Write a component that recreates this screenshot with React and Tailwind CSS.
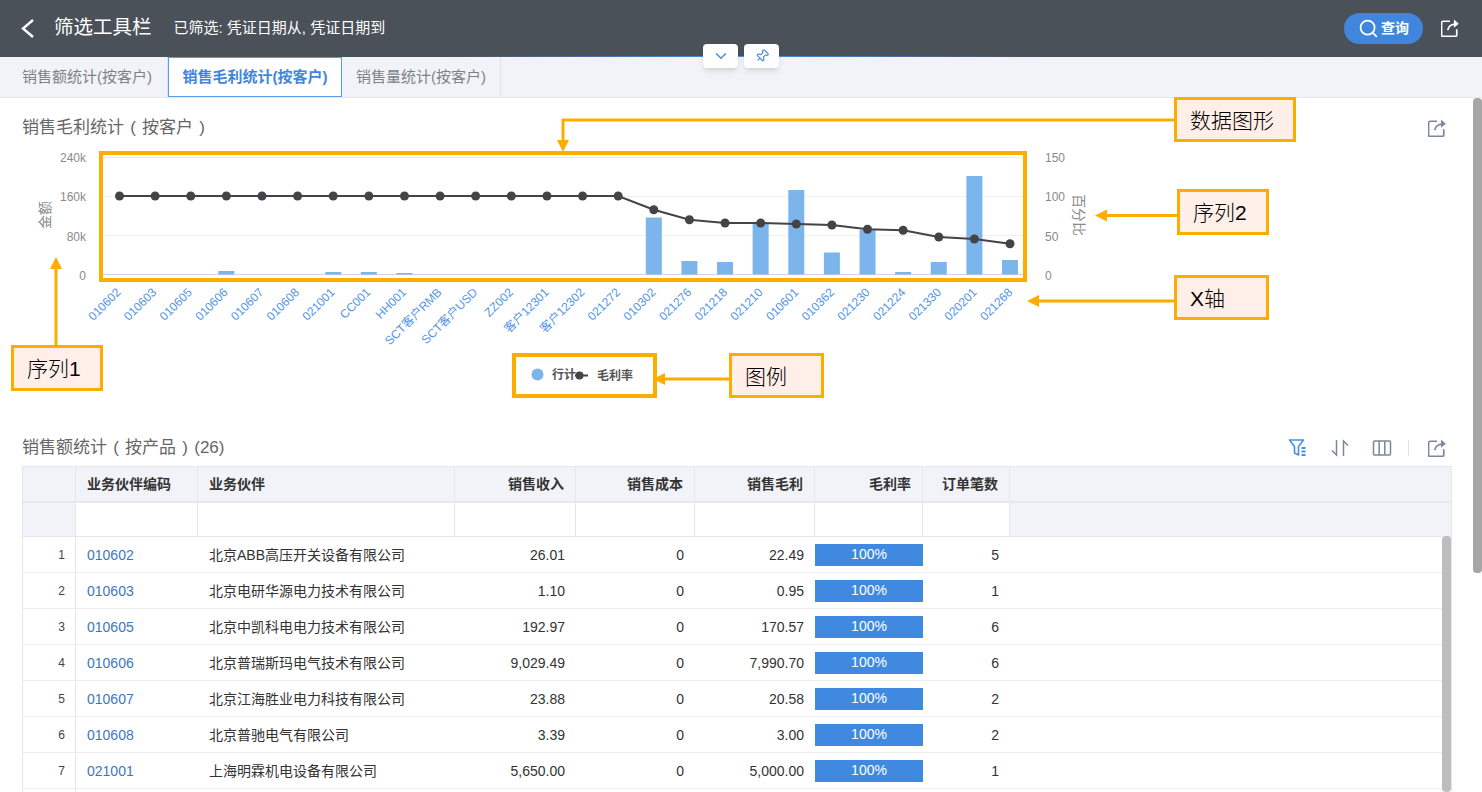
import React from "react";
import { ChevronDown, Pin, Search } from "lucide-react";

const FONT = "font-['Liberation_Sans','Noto_Sans_CJK_SC',sans-serif]";

const categories = [
  "010602", "010603", "010605", "010606", "010607", "010608", "021001", "CC001", "HH001",
  "SCT客户RMB", "SCT客户USD", "ZZ002", "客户12301", "客户12302", "021272", "010302", "021276",
  "021218", "021210", "010601", "010362", "021230", "021224", "021330", "020201", "021268",
];

// top of each bar in page px, baseline is 274.5
const barTops = {
  3: 271, 6: 272, 7: 272, 8: 273, 15: 217.5, 16: 261, 17: 262, 18: 223, 19: 190,
  20: 252.5, 21: 230, 22: 272, 23: 262, 24: 176, 25: 260,
};

const lineYs = [
  196, 196, 196, 196, 196, 196, 196, 196, 196, 196, 196, 196, 196, 196, 196,
  209.7, 219.7, 223, 223, 224, 225, 229.3, 230.3, 237, 239, 243.7,
];

const catX = (i) => 119.5 + i * 35.62;

const rows = [
  ["1", "010602", "北京ABB高压开关设备有限公司", "26.01", "0", "22.49", "5"],
  ["2", "010603", "北京电研华源电力技术有限公司", "1.10", "0", "0.95", "1"],
  ["3", "010605", "北京中凯科电电力技术有限公司", "192.97", "0", "170.57", "6"],
  ["4", "010606", "北京普瑞斯玛电气技术有限公司", "9,029.49", "0", "7,990.70", "6"],
  ["5", "010607", "北京江海胜业电力科技有限公司", "23.88", "0", "20.58", "2"],
  ["6", "010608", "北京普驰电气有限公司", "3.39", "0", "3.00", "2"],
  ["7", "021001", "上海明霖机电设备有限公司", "5,650.00", "0", "5,000.00", "1"],
];

const GRID = "grid grid-cols-[53px_122px_257px_121px_119px_120px_108px_87px_1fr]";

const ExportIcon = ({ className }) => (
  <svg viewBox="1 1 16 16" fill="none" stroke="currentColor" strokeWidth="1.5" className={className}>
    <path d="M9 3H3a1.500 1.500 0 0 0-1.500 1.500v10.500A1.500 1.500 0 0 0 3 16.500h10.500a1.500 1.500 0 0 0 1.500-1.500v-5" />
    <path d="M7 11c.5-3.500 3-5.500 7.500-5.500" />
    <path d="M12.500 1.500 16.800 5.300l-4.300 3.500" fill="currentColor" stroke="none" />
  </svg>
);

const FilterIcon = () => (
  <svg viewBox="0 0 20 20" fill="none" stroke="#4a90e2" strokeWidth="1.6" className="w-[20px] h-[20px]">
    <path d="M1.500 2h14l-5 6.500V17l-4-2V8.500z" strokeLinejoin="round" />
    <path d="M13.500 10h4M13.500 13.500h4M13.500 17h4" strokeWidth="1.800" />
  </svg>
);

const SortIcon = () => (
  <svg viewBox="0 0 20 20" fill="none" stroke="#7c8798" strokeWidth="1.500" className="w-[20px] h-[20px]">
    <path d="M6.500 2v15L2 12.500" />
    <path d="M13.500 18V3l4.500 4.500" />
  </svg>
);

const ColumnsIcon = () => (
  <svg viewBox="0 0 20 20" fill="none" stroke="#7c8798" strokeWidth="1.500" className="w-[20px] h-[20px]">
    <rect x="1.500" y="3" width="17" height="14" rx="1" />
    <path d="M7.200 3v14M12.800 3v14" />
  </svg>
);

const Chart = () => (
  <svg viewBox="22 150 1430 260" className="block w-[1430px] h-[260px] mt-[11px]">
    {[235.5, 196.5, 157.5].map((y) => (
      <line key={y} x1="101" x2="1028" y1={y} y2={y} stroke="#eef0f3" />
    ))}
    <line x1="101" x2="1028" y1="274.500" y2="274.500" stroke="#ccd6eb" />

    {[["240k", 162], ["160k", 201], ["80k", 240.5], ["0", 279.5]].map(([t, y]) => (
      <text key={t} x="86" y={y} textAnchor="end" fontSize="12" fill="#8a8a8a">{t}</text>
    ))}
    {[["150", 162], ["100", 201], ["50", 240.5], ["0", 279.5]].map(([t, y]) => (
      <text key={t} x="1045" y={y} fontSize="12" fill="#8a8a8a">{t}</text>
    ))}
    <text transform="translate(50 215) rotate(-90)" textAnchor="middle" fontSize="14" fill="#8a8a8a">金额</text>
    <text transform="translate(1074 215) rotate(90)" textAnchor="middle" fontSize="14" fill="#8a8a8a">百分比</text>

    {Object.entries(barTops).map(([i, top]) => (
      <rect key={i} x={catX(Number(i)) - 8} y={top} width="16" height={274.5 - top} fill="#7cb5ec" />
    ))}

    <polyline
      points={lineYs.map((y, i) => `${catX(i)},${y}`).join(" ")}
      fill="none"
      stroke="#434348"
      strokeWidth="2"
    />
    {lineYs.map((y, i) => (
      <circle key={i} cx={catX(i)} cy={y} r="4.500" fill="#434348" />
    ))}

    {categories.map((c, i) => (
      <text
        key={c}
        transform={`translate(${catX(i) + 2 + i * 0.05} 293) rotate(-45)`}
        textAnchor="end"
        fontSize="12"
        fill="#5596e6"
      >
        {c}
      </text>
    ))}

    <circle cx="537.500" cy="374.500" r="6" fill="#7cb5ec" />
    <text x="552" y="379" fontSize="12" fontWeight="700" fill="#555">行计</text>
    <line x1="575" x2="588" y1="375.500" y2="375.500" stroke="#434348" strokeWidth="2" />
    <circle cx="579.500" cy="375.500" r="4" fill="#434348" />
    <text x="597" y="380" fontSize="12" fontWeight="700" fill="#555">毛利率</text>
  </svg>
);

const Callout = ({ className, children }) => (
  <div
    className={`absolute flex items-center pl-[13px] pt-[2px] border-[3px] border-[#fdac00] bg-[#ffefe8] text-[21px] font-light text-black ${className}`}
  >
    {children}
  </div>
);

const Annotations = () => (
  <>
    <svg viewBox="0 0 1482 792" className="absolute inset-0 w-[1482px] h-[792px] pointer-events-none">
      <g fill="none" stroke="#fdac00">
        <rect x="101" y="153" width="924" height="127" strokeWidth="4" />
        <rect x="514" y="355" width="141" height="41" strokeWidth="4" />
        <path d="M1174 120H563v24" strokeWidth="3" />
        <path d="M1177 215.500h-72" strokeWidth="3" />
        <path d="M1174 301h-136" strokeWidth="3" />
        <path d="M56 345v-80" strokeWidth="3" />
        <path d="M729 379h-66" strokeWidth="3" />
      </g>
      <g fill="#fdac00">
        <path d="M557 140h12l-6 12z" />
        <path d="M1107 209.500v12l-12-6z" />
        <path d="M1039 295v12l-12-6z" />
        <path d="M50 269h12l-6-12z" />
        <path d="M665 373v12l-12-6z" />
      </g>
    </svg>
    <Callout className="left-[1174px] top-[97px] w-[122px] h-[45px]">数据图形</Callout>
    <Callout className="left-[1177px] top-[189px] w-[92px] h-[46px]">序列2</Callout>
    <Callout className="left-[1174px] top-[275px] w-[95px] h-[45px]">X轴</Callout>
    <Callout className="left-[11px] top-[345px] w-[92px] h-[46px]">序列1</Callout>
    <Callout className="left-[729px] top-[353px] w-[95px] h-[45px]">图例</Callout>
  </>
);

const Tab = ({ active, className = "", children }) => (
  <div
    className={
      active
        ? "flex items-center justify-center w-[174px] h-[40px] bg-white border border-[#5a9de8] text-[#3f86dc] font-bold text-[15px]"
        : `flex items-center h-[40px] border-r border-[#dfe3ea] text-[#7d828a] text-[15px] ${className}`
    }
  >
    {children}
  </div>
);

const Th = ({ right, children, className = "" }) => (
  <div
    className={`flex items-center px-[11px] border-r border-[#e4e7ed] font-bold text-[14px] text-[#333] ${
      right ? "justify-end" : ""
    } ${className}`}
  >
    {children}
  </div>
);

const Num = ({ children }) => (
  <div className="flex items-center justify-end pt-px pr-[11px] text-[14px] text-[#333]">{children}</div>
);

const TableHead = () => (
  <>
    <div className={`${GRID} h-[36px] bg-[#f1f3f8] border-b-2 border-[#e6e8ee]`}>
      <Th />
      <Th>业务伙伴编码</Th>
      <Th>业务伙伴</Th>
      <Th right>销售收入</Th>
      <Th right>销售成本</Th>
      <Th right>销售毛利</Th>
      <Th right>毛利率</Th>
      <Th right>订单笔数</Th>
      <div />
    </div>
    <div className={`${GRID} h-[34px] border-b border-[#e4e7ed]`}>
      <div className="bg-[#f1f3f8] border-r border-[#e4e7ed]" />
      {[0, 1, 2, 3, 4, 5, 6].map((i) => (
        <div key={i} className="bg-white border-r border-[#e4e7ed]" />
      ))}
      <div className="bg-[#f1f3f8]" />
    </div>
  </>
);

const TableRow = ({ row }) => (
  <div className={`${GRID} h-[36px] border-b border-[#ebedf0]`}>
    <div className="flex items-center justify-end pt-px pr-[10px] border-r border-[#e4e7ed] text-[12px] text-[#444]">
      {row[0]}
    </div>
    <div className="flex items-center pt-px pl-[11px] text-[14px] text-[#3a78c2]">{row[1]}</div>
    <div className="flex items-center pt-px pl-[11px] text-[14px] text-[#333]">{row[2]}</div>
    <Num>{row[3]}</Num>
    <Num>{row[4]}</Num>
    <Num>{row[5]}</Num>
    <div className="flex items-center">
      <div className="flex items-center justify-center w-full h-[22px] bg-[#3f8ae0] text-white text-[14px]">100%</div>
    </div>
    <Num>{row[6]}</Num>
    <div />
  </div>
);

export default function App() {
  return (
    <div className={`relative w-[1482px] h-[792px] overflow-hidden bg-white flex flex-col ${FONT}`}>
      <header className="h-[56px] shrink-0 bg-[#4a5159] flex items-center pl-[21px] pr-[23px] text-white">
        <svg viewBox="0 0 13 19" fill="none" stroke="currentColor" strokeWidth="2.400" className="w-[13px] h-[19px]">
          <path d="M12 1 2 9.500 12 18" />
        </svg>
        <span className="ml-[20px] text-[19.5px]">筛选工具栏</span>
        <span className="ml-[22px] text-[15px]">已筛选: 凭证日期从, 凭证日期到</span>
        <div className="ml-auto flex items-center gap-[18px]">
          <button className="flex items-center justify-center gap-[2px] w-[79px] h-[31px] rounded-full bg-[#3f86dc] text-[14px] font-bold">
            <Search className="w-[21px] h-[21px]" strokeWidth={2} />
            查询
          </button>
          <ExportIcon className="w-[18px] h-[18px] text-white" />
        </div>
      </header>
      <div className="h-px shrink-0 bg-gradient-to-r from-[#4a5159] from-30% via-[#4a90e2] to-[#4a5159] to-70%" />

      <nav className="h-[41px] shrink-0 bg-[#f1f3f8] border-b border-[#e6e8ee] flex">
        <Tab className="w-[168px] pl-[22px]">销售额统计(按客户)</Tab>
        <Tab active>销售毛利统计(按客户)</Tab>
        <Tab className="w-[159px] pl-[14px]">销售量统计(按客户)</Tab>
      </nav>

      <main className="flex-1 min-h-0 px-[22px] pt-[19px]">
        <div className="flex items-center justify-between h-[22px] w-[1424px]">
          <h2 className="text-[17px] text-[#666] [word-spacing:1.5px]">销售毛利统计 ( 按客户 )</h2>
          <ExportIcon className="w-[18px] h-[18px] text-[#7c8798]" />
        </div>

        <Chart />

        <div className="flex items-center justify-between h-[22px] mt-[27px] w-[1424px]">
          <h2 className="text-[17px] text-[#666] [word-spacing:1.5px]">销售额统计 ( 按产品 ) (26)</h2>
          <div className="flex items-center">
            <FilterIcon />
            <span className="ml-[22px]"><SortIcon /></span>
            <span className="ml-[22px]"><ColumnsIcon /></span>
            <span className="ml-[16px] mr-[19px] w-px h-[16px] bg-[#dfe3ea]" />
            <ExportIcon className="w-[18px] h-[18px] text-[#7c8798]" />
          </div>
        </div>

        <div className="mt-[7px] w-[1430px] border border-[#e4e7ed]">
          <TableHead />
          {rows.map((row) => (
            <TableRow key={row[0]} row={row} />
          ))}
          <div className={`${GRID} h-[36px]`}>
            <div className="border-r border-[#e4e7ed]" />
          </div>
        </div>
      </main>

      {/* floating buttons on the header edge */}
      <div className="absolute left-[703px] top-[44px] flex gap-[6px]">
        <button className="flex items-center justify-center w-[35px] h-[24px] rounded bg-white shadow-md text-[#4a90e2]">
          <ChevronDown className="w-[18px] h-[18px]" />
        </button>
        <button className="flex items-center justify-center w-[35px] h-[24px] rounded bg-white shadow-md text-[#4a90e2]">
          <Pin className="w-[14px] h-[14px] rotate-45" />
        </button>
      </div>

      {/* scrollbars */}
      <div className="absolute left-[1473px] top-[98px] w-[9px] h-[475px] rounded bg-[#a6a6a6]" />
      <div className="absolute left-[1442px] top-[536px] w-[9px] h-[256px] rounded bg-[#bdbdbd]" />

      <Annotations />
    </div>
  );
}
